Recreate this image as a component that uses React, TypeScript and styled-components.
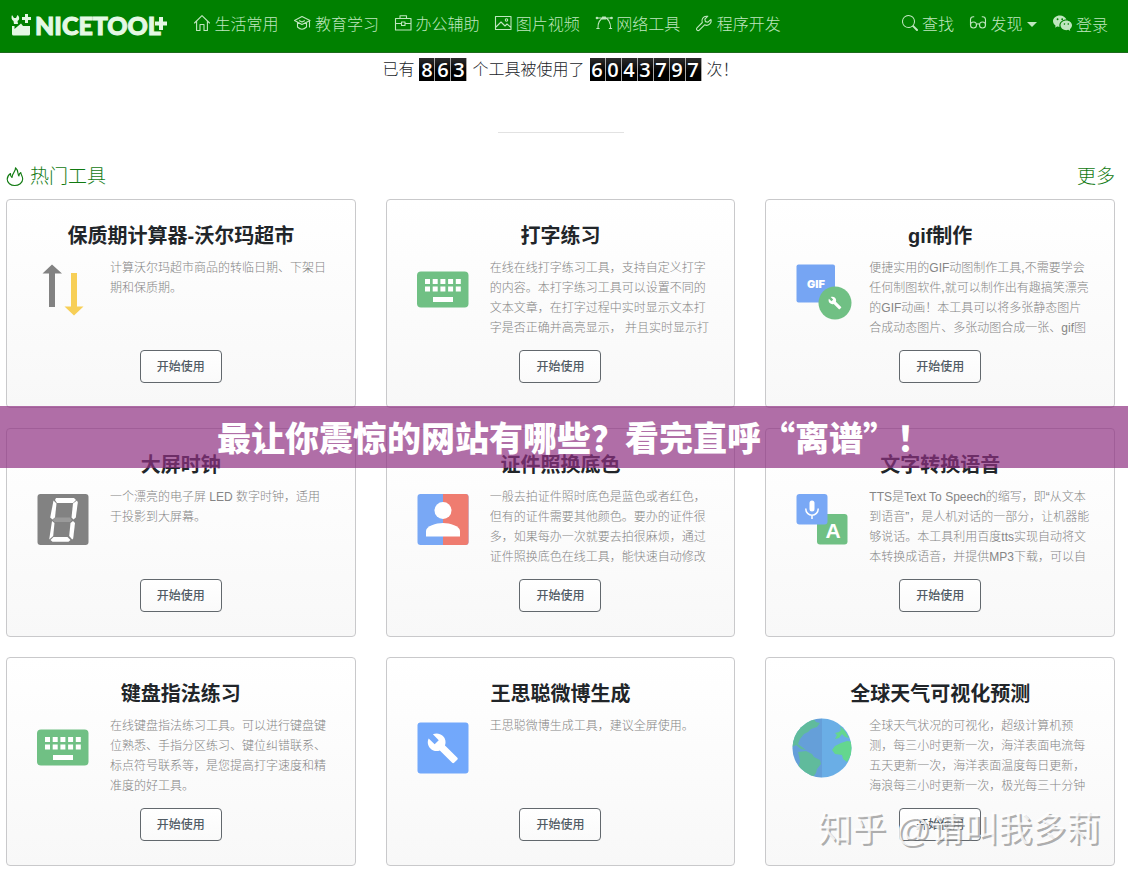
import React from "react";
import styled, { createGlobalStyle } from "styled-components";
import { BsWechat, BsSearch } from "react-icons/bs";

const GlobalStyle = createGlobalStyle`
  * { box-sizing: border-box; }
  body {
    margin: 0;
    background: #fff;
    color: #212529;
    font-family: "Liberation Sans", "Noto Sans CJK SC", sans-serif;
    font-size: 16px;
    line-height: 24px;
    text-spacing-trim: space-all;
  }
`;

const Page = styled.div`
  position: relative;
  padding-bottom: 9px;
`;

const Header = styled.header`
  display: flex;
  align-items: flex-start;
  justify-content: space-between;
  height: 53px;
  padding: 13px 20px 0 11px;
  background: #008000;
  border-bottom: 1px solid #1c6b1c;
`;

const HeaderGroup = styled.div`
  display: flex;
  align-items: center;
`;

const Logo = styled.a`
  display: flex;
  align-items: center;
  width: 156px;
  margin-right: 27px;
  color: #e4f8e4;
  text-decoration: none;
  font-family: Lato, sans-serif;
  font-weight: 900;
  font-size: 25px;
  line-height: 22px;
  -webkit-text-stroke: 1px currentColor;
  svg { display: block; flex: none; }
`;

const LogoMark = styled.svg`
  margin-right: 4px;
`;

const LogoPlus = styled.svg`
  margin: -4px 0 0 -6px;
`;

const Nav = styled.nav`
  display: flex;
  gap: 16px;
`;

const NavLink = styled.a`
  color: #bfe6bf;
  text-decoration: none;
  white-space: nowrap;
  font-weight: 300;
  svg { vertical-align: -1px; }
`;

const Caret = styled.span`
  display: inline-block;
  margin-left: 4px;
  vertical-align: 3px;
  border: 5px solid transparent;
  border-top-color: currentColor;
  border-bottom: 0;
`;

const Main = styled.main`
  padding: 4px 13px 0 6px;
`;

const Stats = styled.p`
  display: flex;
  justify-content: center;
  align-items: center;
  gap: 5px;
  margin: 0;
  height: 25px;
  font-weight: 300;
`;

const Counter = styled.span`
  display: flex;
`;

const Digit = styled.span`
  width: 16px;
  height: 23px;
  border-right: 1px solid #aaa;
  background: linear-gradient(#2c2c2c, #000 60%);
  color: #fff;
  font-family: "Open Sans", sans-serif;
  font-size: 20px;
  font-weight: 600;
  line-height: 23px;
  text-align: center;
`;

const Divider = styled.hr`
  width: 126px;
  margin: 50px auto 32px;
  border: 0;
  border-top: 1px solid #e2e2e2;
`;

const SectionHead = styled.div`
  display: flex;
  justify-content: space-between;
  align-items: center;
  margin-bottom: 10px;
  color: #117a11;
  font-size: 19px;
`;

const SectionTitle = styled.h2`
  display: flex;
  align-items: center;
  gap: 6px;
  margin: 0;
  font-size: 19px;
  font-weight: 300;
`;

const MoreLink = styled.a`
  color: inherit;
  font-weight: 300;
  text-decoration: none;
`;

const Grid = styled.div`
  display: grid;
  grid-template-columns: repeat(3, 1fr);
  gap: 20px 30px;
`;

const Card = styled.article`
  padding: 24px;
  border: 1px solid #c9c9cb;
  border-radius: 4px;
  background: linear-gradient(#fff, #f8f8f8);
`;

const CardTitle = styled.h3`
  margin: 0 0 10px;
  font-size: 20px;
  line-height: 24px;
  text-align: center;
`;

const CardBody = styled.div`
  display: flex;
  gap: 15px;
  height: 80px;
`;

const IconBox = styled.div`
  display: flex;
  flex: none;
  align-items: center;
  width: 64px;
  height: 64px;
`;

const Description = styled.p`
  flex: 1;
  min-width: 0;
  margin: 0;
  overflow: hidden;
  color: #858585;
  font-size: 12px;
  font-weight: 300;
  line-height: 20px;
`;

const UseButton = styled.button`
  display: block;
  width: 82px;
  height: 33px;
  margin: 12px auto 0;
  padding: 0;
  border: 1px solid #62686d;
  border-radius: 4px;
  background: linear-gradient(#fff, #fafafa);
  color: #525c65;
  font-family: inherit;
  font-size: 12px;
  font-weight: 500;
  line-height: 18px;
`;

const Banner = styled.div`
  position: absolute;
  top: 406px;
  left: 0;
  right: 0;
  height: 62px;
  padding-left: 20px;
  background: rgba(143, 48, 129, 0.7);
  color: #fff;
  font-family: "Noto Sans CJK SC", sans-serif;
  font-size: 34px;
  font-weight: 900;
  line-height: 62px;
  text-align: center;
`;

const Watermark = styled.div`
  position: absolute;
  right: 28px;
  bottom: 22px;
  color: rgba(255, 255, 255, 0.8);
  font-size: 34px;
  line-height: 48px;
  text-shadow: 2px 2px 0 rgba(140, 140, 140, 0.7);
  pointer-events: none;
`;

const line = { fill: "none", stroke: "currentColor", strokeWidth: 1.1, strokeLinejoin: "round", strokeLinecap: "round" } as const;

const NavSvg = ({ children }: { children: React.ReactNode }) => (
  <svg width="16" height="16" viewBox="0 0 16 16" overflow="visible" aria-hidden="true" {...line}>{children}</svg>
);

const HouseIcon = () => (
  <NavSvg><path d="M.5 8 8 .7 15.500 8M2.600 6.200V15.500H6V9.500H10V15.500H13.400V6.200" /></NavSvg>
);
const CapIcon = () => (
  <NavSvg><path d="M8 1.500 16 5.500 8 9.500.500 5.500zM3.500 7.200V12Q8 16.500 12.500 12V7.200M15.500 6V12M5.500 5.800 8 7l2.500-1.200" /></NavSvg>
);
const BriefcaseIcon = () => (
  <NavSvg><path d="M.5 3.500h15.500v11.500H.5zM5 3.500V.8h6.500v2.700M.5 8.500H6.500M10 8.500H16M6.500 7h3.500v3.500H6.500z" /></NavSvg>
);
const ImageIcon = () => (
  <NavSvg><path d="M.5 1.500h15.500v13H.5zM1 12 6 7l4 4 2-2 4 3.500" /><circle cx="11.500" cy="5" r="1.200" /></NavSvg>
);
const ArchIcon = () => (
  <NavSvg><path d="M2 13.500C1.500 8 4 3.500 8 3s7 5 6.500 10.500M.8 13.500h2.400M13.300 13.500h2.400M1.500 3h5M10 3h5" /><circle cx="1" cy="3" r=".8" fill="currentColor" /><circle cx="15.500" cy="3" r=".8" fill="currentColor" /><path d="M6.500 2h3v2h-3z" fill="currentColor" /></NavSvg>
);
const WrenchOutline = () => (
  <NavSvg><path d="M10.500 1.200a4.500 4.500 0 0 0-4.200 6.300L1 12.800a1.600 1.600 0 0 0 2.300 2.300l5.300-5.300a4.500 4.500 0 0 0 6.300-5.400L12 7.200 9.400 6.600 8.900 4.100 11.800 1.200z" /></NavSvg>
);
const GlassesIcon = () => (
  <NavSvg><circle cx="3.500" cy="10" r="3" /><circle cx="12.500" cy="10" r="3" /><path d="M.5 10V4.500Q.7 1.600 3.800 1.800M15.500 10V4.500Q15.300 1.600 12.200 1.800M6.500 9.500q1.500-1.500 3 0" /></NavSvg>
);
const FlameIcon = () => (
  <svg width="18" height="20" viewBox="0 0 18 20" aria-hidden="true" {...line}>
    <path d="M9.500 .8C10 4.500 6 6 6 10.500 4.800 9.700 4.300 8.200 4.500 6.500 2.300 8 1.200 10 1.200 12.300c0 3.600 3.400 6.200 7.500 6.200s8-2.600 8-6.400C16.700 9.500 15 8 14.800 5.500 13.500 6.300 13 7.500 12.900 9 11.500 8.300 12.800 3.200 9.500 .8z" />
  </svg>
);

const wrenchPath =
  "M22.7 19l-9.1-9.1c.9-2.3.4-5-1.5-6.900-2-2-5-2.400-7.400-1.300L9 6 6 9 1.600 4.700C.4 7.100.9 10.100 2.900 12.100c1.900 1.900 4.600 2.400 6.900 1.500l9.100 9.100c.4.4 1 .4 1.400 0l2.300-2.300c.5-.4.5-1.100.1-1.400z";

const ToolSvg = ({ children }: { children: React.ReactNode }) => (
  <svg width="64" height="64" viewBox="0 0 64 64" aria-hidden="true">{children}</svg>
);

const ArrowsIcon = () => (
  <ToolSvg>
    <path fill="#828282" d="M21 6.500 31 15.500H24V49H18V15.500H11.500z" />
    <path fill="#f7cf57" d="M40 15h6v33.500h6.500L43 57.500 33.500 48.500H40z" />
  </ToolSvg>
);
const KeyboardIcon = () => (
  <ToolSvg>
    <rect x="6" y="13.500" width="51.500" height="36" rx="4" fill="#70c084" />
    {[0, 1, 2, 3, 4].map((i) => (
      <path key={i} fill="#fff" d={`M${14 + i * 7.7} 21h5v5h-5zM${14 + i * 7.7} 28.500h5v5h-5z`} />
    ))}
    <path fill="#fff" d="M22 39h20v5H22z" />
  </ToolSvg>
);
const GifIcon = () => (
  <ToolSvg>
    <rect x="6.500" y="6.500" width="38.500" height="38" rx="2" fill="#76a5f3" />
    <text x="26" y="29.500" textAnchor="middle" fill="#fff" fontFamily="Inter, sans-serif" fontWeight="900" fontSize="11">GIF</text>
    <circle cx="45" cy="45" r="16.500" fill="#70c084" />
    <path fill="#fff" transform="translate(38 38) scale(.58)" d={wrenchPath} />
  </ToolSvg>
);
const ClockDigitIcon = () => (
  <ToolSvg>
    <rect x="6.500" y="7" width="51" height="51" rx="3" fill="#828282" />
    <g fill="#fff">
      <path d="M25 11h18l2 2-3 3H26l-2-3z" />
      <path d="M22.500 13.500l3 3-1.500 14-2.500 2-2.300-2z" />
      <path d="M46 13.500l.8 2-2 15-2.300 2-2-2 1.500-14z" />
      <path d="M21 34l2.500 2-1.300 13-4 3.500z" />
      <path d="M42 34l2 2-1.800 15.500-1 1-3-3.500L39.500 36z" />
      <path d="M22.500 50h14l3 3-2 1.800H21.500l-2-1.800z" />
    </g>
    <path fill="#9a9a9a" d="M24 30.500h15l2 2.500-2 2H23.500l-2-2z" />
  </ToolSvg>
);
const PortraitIcon = () => (
  <ToolSvg>
    <rect x="6.500" y="7" width="51" height="51" rx="3" fill="#79a8f5" />
    <path fill="#ef7c70" d="M32 7h22.500a3 3 0 0 1 3 3v45a3 3 0 0 1-3 3H32z" />
    <circle cx="32" cy="23.500" r="8.500" fill="#fff" />
    <path fill="#fff" d="M15 49.500V44c0-5 10-8 17-8s17 3 17 8v5.500z" />
  </ToolSvg>
);
const SpeechIcon = () => (
  <ToolSvg>
    <rect x="27" y="27" width="30.500" height="30.500" rx="3" fill="#70c084" />
    <rect x="6.500" y="7" width="31" height="30.500" rx="3" fill="#79a8f5" />
    <rect x="19.500" y="13.500" width="5" height="11" rx="2.500" fill="#fff" />
    <path fill="none" stroke="#fff" strokeWidth="1.500" d="M15.800 21.500v.5a6.200 6.200 0 0 0 12.400 0v-.5M22 28v4" />
    <text x="43" y="50.500" textAnchor="middle" fill="#fff" fontFamily="Liberation Sans, sans-serif" fontWeight="700" fontSize="21">A</text>
  </ToolSvg>
);
const BuildIcon = () => (
  <ToolSvg>
    <rect x="6.500" y="6.500" width="51" height="51" rx="3" fill="#72a8fb" />
    <path fill="#fff" transform="translate(15.500 16) scale(1.36)" d={wrenchPath} />
  </ToolSvg>
);
const GlobeIcon = () => (
  <ToolSvg>
    <defs>
      <clipPath id="globe-edge"><circle cx="32" cy="32" r="29.500" /></clipPath>
    </defs>
    <g clipPath="url(#globe-edge)">
      <path fill="#6aaee6" d="M0 0h64v64H0z" />
      <path fill="#64d68f" d="M2 20Q8 7 23 2l3 4 4 1-3 4-6 2-3 3-4 2-4 5-2 5 4 3 4 3-5-1-5-4-4 2z" />
      <path fill="#64d68f" d="M8 36l8-1 6 3 2 3 6 3 1 4-4 5-1 4-3 4-5-1L8 52l2-7z" />
      <path fill="#64d68f" d="M50 10l5 5 4 7-4-1-3-3-3 4-4 1 2-4-2-2 4-1 2-2z" />
      <path fill="#64d68f" d="M63 26l-6-1-6 2-6 3-3 4 3 4 7 1 1 4 4 3 5-8z" />
      <path fill="#5b7fbd" fillOpacity=".3" d="M0 0h32v64H0z" />
    </g>
  </ToolSvg>
);

const navItems = [
  { label: "生活常用", icon: <HouseIcon /> },
  { label: "教育学习", icon: <CapIcon /> },
  { label: "办公辅助", icon: <BriefcaseIcon /> },
  { label: "图片视频", icon: <ImageIcon /> },
  { label: "网络工具", icon: <ArchIcon /> },
  { label: "程序开发", icon: <WrenchOutline /> },
];

const tools = [
  { title: "保质期计算器-沃尔玛超市", icon: <ArrowsIcon />, text: "计算沃尔玛超市商品的转临日期、下架日期和保质期。" },
  { title: "打字练习", icon: <KeyboardIcon />, text: "在线在线打字练习工具，支持自定义打字的内容。本打字练习工具可以设置不同的文本文章，在打字过程中实时显示文本打字是否正确并高亮显示， 并且实时显示打" },
  { title: "gif制作", icon: <GifIcon />, text: "便捷实用的GIF动图制作工具,不需要学会任何制图软件,就可以制作出有趣搞笑漂亮的GIF动画！本工具可以将多张静态图片合成动态图片、多张动图合成一张、gif图" },
  { title: "大屏时钟", icon: <ClockDigitIcon />, text: "一个漂亮的电子屏 LED 数字时钟，适用于投影到大屏幕。" },
  { title: "证件照换底色", icon: <PortraitIcon />, text: "一般去拍证件照时底色是蓝色或者红色，但有的证件需要其他颜色。要办的证件很多，如果每办一次就要去拍很麻烦，通过证件照换底色在线工具，能快速自动修改" },
  { title: "文字转换语音", icon: <SpeechIcon />, text: "TTS是Text To Speech的缩写，即“从文本到语音”，是人机对话的一部分，让机器能够说话。本工具利用百度tts实现自动将文本转换成语音，并提供MP3下载，可以自" },
  { title: "键盘指法练习", icon: <KeyboardIcon />, text: "在线键盘指法练习工具。可以进行键盘键位熟悉、手指分区练习、键位纠错联系、标点符号联系等，是您提高打字速度和精准度的好工具。" },
  { title: "王思聪微博生成", icon: <BuildIcon />, text: "王思聪微博生成工具，建议全屏使用。" },
  { title: "全球天气可视化预测", icon: <GlobeIcon />, text: "全球天气状况的可视化，超级计算机预测，每三小时更新一次，海洋表面电流每五天更新一次，海洋表面温度每日更新，海浪每三小时更新一次，极光每三十分钟" },
];

const FlipCounter = ({ value }: { value: string }) => (
  <Counter>
    {value.split("").map((digit, i) => (
      <Digit key={i}>{digit}</Digit>
    ))}
  </Counter>
);

export default function App() {
  return (
    <Page>
      <GlobalStyle />
      <Header>
        <HeaderGroup>
          <Logo href="#">
            <LogoMark width="20" height="22" viewBox="0 0 20 22" fill="currentColor" aria-hidden="true">
              <path d="M1 1 3 4 5 4 6.500 1C9 3 8.500 6 6.500 7L7 10H3L2.500 7C.5 6 0 3 1 1z" />
              <path d="M14 0h3v3h3v3h-3v3h-3V6h-3V3h3z" />
              <path d="M1 12H3.500V15L10 9.500 12 12H19V20a1.500 1.500 0 0 1-1.500 1.500H2.500A1.500 1.500 0 0 1 1 20z" />
            </LogoMark>
            NICETOOL
            <LogoPlus width="12" height="13" viewBox="0 0 12 13" fill="currentColor" aria-hidden="true">
              <path d="M4 0h4v4.500h4v4H8V13H4V8.500H0v-4h4z" />
            </LogoPlus>
          </Logo>
          <Nav>
            {navItems.map((item) => (
              <NavLink href="#" key={item.label}>
                {item.icon} {item.label}
              </NavLink>
            ))}
          </Nav>
        </HeaderGroup>
        <Nav>
          <NavLink href="#"><BsSearch size={16} /> 查找</NavLink>
          <NavLink href="#"><GlassesIcon /> 发现<Caret /></NavLink>
          <NavLink href="#"><BsWechat size={19} /> 登录</NavLink>
        </Nav>
      </Header>
      <Main>
        <Stats>
          <span>已有</span>
          <FlipCounter value="863" />
          <span>个工具被使用了</span>
          <FlipCounter value="6043797" />
          <span>次！</span>
        </Stats>
        <Divider />
        <SectionHead>
          <SectionTitle><FlameIcon />热门工具</SectionTitle>
          <MoreLink href="#">更多</MoreLink>
        </SectionHead>
        <Grid>
          {tools.map((tool) => (
            <Card key={tool.title}>
              <CardTitle>{tool.title}</CardTitle>
              <CardBody>
                <IconBox>{tool.icon}</IconBox>
                <Description>{tool.text}</Description>
              </CardBody>
              <UseButton type="button">开始使用</UseButton>
            </Card>
          ))}
        </Grid>
      </Main>
      <Banner>最让你震惊的网站有哪些？看完直呼“离谱”！</Banner>
      <Watermark>知乎 @请叫我多莉</Watermark>
    </Page>
  );
}
